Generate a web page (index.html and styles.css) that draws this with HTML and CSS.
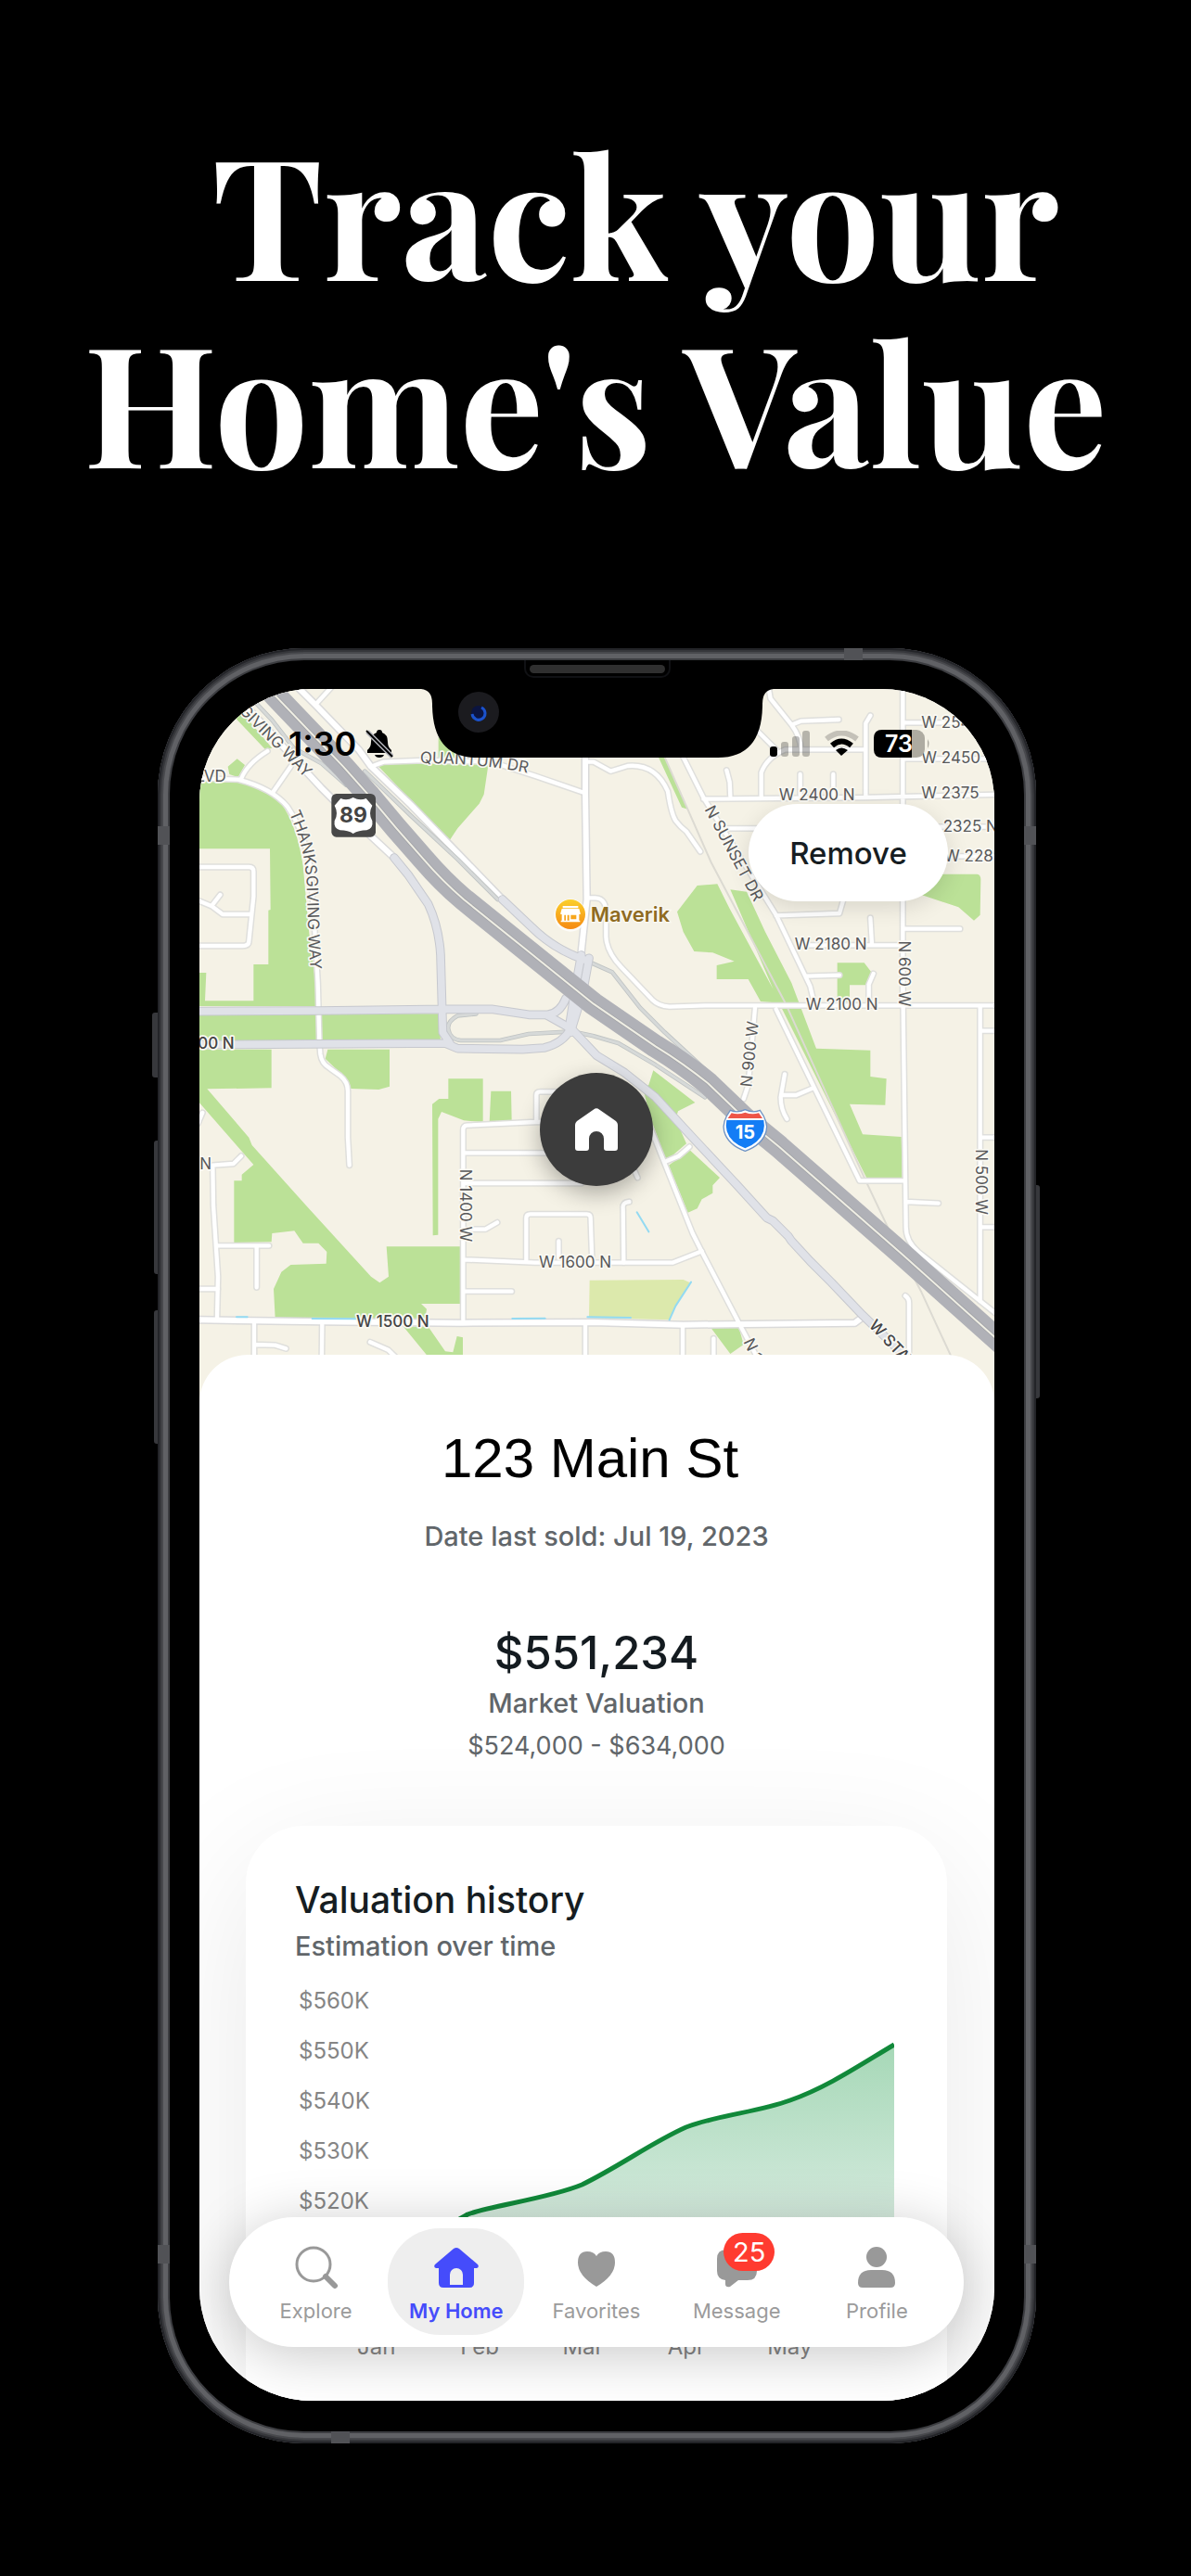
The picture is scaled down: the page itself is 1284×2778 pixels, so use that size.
FILE: index.html
```html
<!DOCTYPE html>
<html lang="en">
<head>
<meta charset="utf-8">
<meta name="viewport" content="width=device-width, initial-scale=1">
<title>Track your Home's Value</title>
<link rel="stylesheet" href="styles.css">
</head>
<body>
<main class="page">
  <h1 class="headline"><span class="headline-line headline-first">Track your</span> <span class="headline-line">Home's Value</span></h1>

  <div class="phone">
    <i class="side-key key-mute"></i><i class="side-key key-up"></i><i class="side-key key-down"></i><i class="side-key key-power"></i>
    <i class="band band-top"></i><i class="band band-bottom"></i><i class="band band-lt"></i><i class="band band-rt"></i><i class="band band-lb"></i><i class="band band-rb"></i>
    <i class="earpiece"></i>

    <div class="screen">
      <section class="map" aria-label="Map">
        <svg class="map-art" viewBox="165 189 2571 2310" role="img" aria-label="Area around the property">
          <defs>
            <g id="streets">
              <path d="M540 240L595 180M720 440L760 425L890 420L1110 425L1250 470L1410 525M165 478L290 482Q400 510 450 570Q510 660 525 780L540 1000L548 1140L553 1330L556 1370Q560 1400 585 1415L620 1440Q645 1460 645 1490V1640L650 1730M300 480Q320 430 385 390M405 520L460 440M165 765H325Q340 765 340 780V860L325 1005Q325 1020 305 1020H165M165 875L205 892L240 918H330M205 890L232 855"/>
              <g transform="translate(0 1140)"><path d="M300 560L275 585L208 590L210 720L225 950L222 1085M175 420L160 455M222 850H390M350 852V985M165 990H225M342 1100V1260M343 1170L410 1172L445 1183M562 1100L560 1260M717 1162L775 1187L830 1240M1300 450L1250 450L1030 461Q1018 462 1018 475V1090M1255 450V362Q1255 352 1268 352H1330M1020 550H1300M1020 648H1400M1030 797H1090L1128 775M1020 895L1250 905H1695L1790 868M1222 900V760Q1222 748 1235 748H1418Q1430 748 1430 760L1435 900M1327 835V890M1020 998H1175M1413 1105V1260"/></g>
              <g transform="translate(1440 0)"><path d="M-22 865H5Q45 865 40 930V990Q42 1040 90 1090L190 1195Q210 1215 245 1217L360 1213H1320M-26 425H0L55 455L110 438Q200 430 240 520Q250 590 265 615Q280 635 300 650L345 715M285 400L355 540L590 920L700 1150L712 1200M355 545L880 540L1320 530M565 180L572 220L640 305Q670 345 670 385M640 305L670 293L793 288M895 275L880 300V535M520 315L590 385M542 535V460Q560 410 620 385H880M430 452L440 490L442 535M668 465V530M775 465V530M1000 298H1320M1000 415H1320M415 640H560M1000 635H1320M1100 730H1320M590 922L795 915L808 870M1000 965H1185M690 1018H1000M895 930L900 1015M690 1118L795 1115M905 1110L890 1145V1205M1000 180V1210"/></g>
              <g transform="translate(1440 1140)"><path d="M115 708Q92 710 95 730L97 905M142 630L120 580M180 460L320 810L350 870L470 1100L560 1270M235 577L275 560L310 530M288 1108V1260M388 1150V1260M1008 1012Q1020 1020 1020 1035V1260M522 80L500 330L485 375M618 295L605 370Q605 410 625 440M612 363H655L710 340M590 85L860 640H1005M1000 0L1010 790Q1010 835 1050 870L1320 1085M1250 75V1030M1250 155H1320M1250 500H1320M1250 790H1320M1010 708L1115 713"/></g>
            </g>
            <g id="avenues">
              <path d="M480 180L540 240L680 385L720 440L850 565L1000 720L1145 870M280 205L440 380L560 510L650 600L795 735M1413 390V525L1418 870L1400 1040M165 2230L560 2236L1010 2240L1440 2238L1730 2246L2285 2240L2305 2225"/>
            </g>
            <g id="arterials">
              <path d="M160 1232L550 1230L960 1225L1110 1225L1230 1243H1290Q1330 1240 1350 1190M160 1340L960 1335L1000 1352L1210 1355L1280 1350Q1340 1335 1365 1290M795 735L840 790L905 885Q940 960 945 1050L952 1300L975 1335M1145 870L1240 960Q1310 1030 1410 1065M1400 1050L1380 1160L1360 1290M1425 1060L1405 1170L1365 1300"/>
              <path d="M1290 1245L1370 1290L1450 1375L1540 1430L1640 1510L1760 1640L1900 1790L2000 1900L2020 1910L2070 1960L2080 1975L2140 2040L2210 2110L2310 2215L2470 2370"/>
            </g>
            <g id="ramps">
              <path d="M1410 1065L1500 1105L1590 1220L1670 1300L1800 1420M1140 1325L1230 1305L1370 1297L1440 1312L1520 1335L1640 1405L1800 1510M1060 1240L1000 1246Q965 1265 970 1290Q975 1322 1010 1326H1140M320 205L400 290L470 380L560 430L640 500M700 455L850 600L1000 740L1130 870"/>
            </g>
            <path id="freeway" d="M380 160L405 205L630 440L710 530Q800 640 890 740Q950 810 1020 870L1200 1015L1440 1208L1640 1345Q1730 1400 1810 1465L1930 1580L2040 1670L2440 2020L2780 2324"/>
            <path id="way-a" d="M292 262L560 530"/>
            <path id="way-b" d="M455 590Q510 710 512 830L518 1000L530 1200"/>
            <path id="way-c" d="M878 428L1000 432Q1150 440 1290 475"/>
            <path id="way-d" d="M1798 578L2000 955"/>
            <path id="way-e" d="M2328 2250L2470 2400"/>
            <path id="way-f" d="M1924 2300L1990 2440"/>
            <linearGradient id="poi" x2="0" y2="1"><stop stop-color="#fbd02c"/><stop offset="1" stop-color="#f58a12"/></linearGradient>
          </defs>

          <rect class="land" x="100" y="100" width="2800" height="2500"/>
          <g class="park">
            <path d="M165 488L310 492Q390 520 430 560Q480 630 500 760L520 980L542 1150V1215H165ZM165 1240H940L945 1330H165ZM165 1355H398V1480L190 1483L325 1640L335 1665L510 1860L720 2090L748 2110L777 2090L770 1993H1015L1008 2178H882L900 2195L895 2225H410L405 2130L430 2075L460 2052L575 2048L577 2010L550 1982H500L472 1942L400 1950L398 1978L277 1980V1780H302V1760L340 1728L165 1528ZM825 2252H905L960 2332L985 2335L998 2283L1017 2287V2350H905ZM580 1355H780V1475L745 1485L655 1482L640 1450L572 1385ZM970 1450H1082V1590L1020 1585L948 1557L937 1580V1955L920 1957L918 1532L940 1515H970ZM1108 1490H1173L1175 1585L1103 1590ZM735 430H1100L1085 530L1070 560L1000 640L973 680ZM938 345L1010 400V420H938ZM262 262H300L400 380L378 385ZM257 440L287 415L312 435L290 475L262 465Z"/>
            <g transform="translate(1440 0)"><path d="M210 410H230L305 578L285 572ZM270 910L335 825L400 820L440 900L605 1205L540 1200L500 1128H398V1083L455 1070L385 1042L325 1038L290 975ZM442 838L495 845L555 975L640 1140L720 1352L895 1358V1443L947 1450L943 1535L828 1532L870 1630L995 1638L998 1775H885L600 1205ZM1060 855L1120 788H1240Q1252 790 1252 805L1250 920L1230 938L1180 895ZM788 1075H875L898 1105L885 1147H828V1200H788Z"/></g>
            <g transform="translate(1440 1140)"><path d="M193 283L328 387L273 415L265 440L300 520L235 575L185 440L160 343L178 330ZM310 540L408 630L385 655V680L350 700L335 730L305 743L243 590ZM380 1117L470 1115L485 1170L442 1200Z"/></g>
          </g>
          <path class="land" d="M165 706H393L395 903L388 905V1080H340V1198H183L187 1107H165Z"/>
          <path class="field" d="M1427 2102L1730 2100L1752 2110L1705 2185L1685 2230L1425 2223Z"/>
          <path class="rail" d="M1670 410L1820 750L2060 1205L2320 1780L2410 1970L2500 2140L2620 2400"/>
          <use href="#streets" class="street-edge"/><use href="#avenues" class="avenue-edge"/>
          <use href="#streets" class="street"/><use href="#avenues" class="avenue"/>
          <path class="water" d="M1755 2108L1705 2185L1685 2230M1580 1882L1618 1945M285 2221H320M530 2226L680 2227M1177 2226L1283 2225M1420 2221L1560 2223"/>
          <use href="#ramps" class="ramp-edge"/><use href="#ramps" class="ramp"/>
          <use href="#arterials" class="arterial-edge"/><use href="#arterials" class="arterial"/>
          <use href="#freeway" class="freeway"/><use href="#freeway" class="median-edge"/><use href="#freeway" class="median"/>

          <g class="label">
            <text><textPath href="#way-a">GIVING WAY</textPath></text>
            <text><textPath href="#way-b">THANKSGIVING WAY</textPath></text>
            <text><textPath href="#way-c">QUANTUM DR</textPath></text>
            <text><textPath href="#way-d">N SUNSET DR</textPath></text>
            <text><textPath href="#way-f">N 1</textPath></text>
            <text x="154" y="490">LVD</text>
            <text x="2500" y="315">W 2540</text>
            <text x="2500" y="430">W 2450</text>
            <text x="2500" y="544">W 2375</text>
            <text x="2570" y="652">2325 N</text>
            <text x="2574" y="747">W 228</text>
            <text x="2162" y="550" class="mid">W 2400 N</text>
            <text x="2207" y="1033" class="mid">W 2180 N</text>
            <text x="2243" y="1227" class="mid">W 2100 N</text>
            <text x="1380" y="2060" class="mid">W 1600 N</text>
            <text x="166" y="1742">N</text>
            <text class="mid" transform="translate(2428 1110) rotate(90)">N 600 W</text>
            <text class="mid" transform="translate(2676 1784) rotate(90)">N 500 W</text>
            <text class="mid" transform="translate(1008 1860) rotate(90)">N 1400 W</text>
            <text class="mid" transform="translate(1962 1372) rotate(-84)">N 900 W</text>
          </g>
          <g class="label label-strong">
            <text x="790" y="2253" class="mid">W 1500 N</text>
            <text x="160" y="1352">00 N</text>
            <text><textPath href="#way-e">W STATE</textPath></text>
          </g>

          <rect x="592" y="528" width="143" height="140" rx="16" fill="#484848"/>
          <path d="M622 543Q642 552 662 540Q684 552 704 543L724 566Q710 592 724 616Q728 640 706 646Q680 646 662 657Q646 646 620 646Q598 640 602 616Q616 592 602 566Z" fill="#fff"/>
          <text class="shield-us mid" x="663" y="621">89</text>
          <path d="M1882 1552Q1905 1562 1930 1550Q1955 1562 1978 1552Q2006 1590 1998 1620Q1986 1664 1930 1684Q1874 1664 1862 1620Q1854 1590 1882 1552Z" fill="#fff" stroke="#6f93c4" stroke-width="4"/>
          <path d="M1870 1584H1990Q1994 1604 1989 1620Q1978 1656 1930 1675Q1882 1656 1871 1620Q1866 1604 1870 1584Z" fill="#147df5"/>
          <path d="M1886 1561Q1908 1568 1930 1559Q1952 1568 1974 1561L1986 1578H1874Z" fill="#ee5548"/>
          <text class="shield-i mid" x="1930" y="1645">15</text>

          <circle cx="1365" cy="921" r="53" fill="#fff" opacity=".7"/>
          <circle cx="1365" cy="918" r="48" fill="url(#poi)"/>
          <path d="M1340 891H1390V898H1340ZM1337 900H1393L1397 914V918H1393V938H1396V943H1334V938H1337V918H1333V914ZM1345 920V938H1350V920ZM1355 920V938H1361V920ZM1366 920V934H1384V920Z" fill="#fff" fill-rule="evenodd"/>
          <text class="poi" x="1430" y="943">Maverik</text>
        </svg>
        <svg class="notch" viewBox="0 0 380 75" aria-hidden="true">
          <path d="M0 0Q12 1 12 16Q12 74 60 74H320Q368 74 368 16Q368 1 380 0Z"/>
          <circle cx="62" cy="25" r="22" fill="#1b1b1f"/>
          <circle cx="62" cy="26" r="8" fill="#0b1440"/>
          <path d="M55 27A7 7 0 1 0 65 20" fill="none" stroke="#1b52cc" stroke-width="3"/>
        </svg>
        <button class="pin" aria-label="Home location">
          <svg viewBox="0 0 46 46" width="46" height="46"><path d="M20 1.500Q23 -1 26 1.500L44 14Q46 16 46 18V43Q46 46 43 46H34Q31 46 31 43V33A8 8 0 0 0 15 33V43Q15 46 12 46H3Q0 46 0 43V18Q0 16 2 14Z" fill="#fff"/></svg>
        </button>
        <button class="remove">Remove</button>
      </section>

      <div class="status">
        <div class="status-group status-time">
          <span>1:30</span>
          <svg width="30" height="32" viewBox="0 0 30 32" aria-hidden="true"><path d="M15 1Q18 1 18 4Q24 6 24 14Q24 20 28 23V26H2V23Q6 20 6 14Q6 6 12 4Q12 1 15 1ZM10 28H20Q19 31 15 31Q11 31 10 28Z"/><path d="M2 3L29 30" stroke="#b3b4ba" stroke-width="5"/><path d="M1 2L29 30" stroke="#000" stroke-width="2"/></svg>
        </div>
        <div class="status-group">
          <svg width="44" height="30" viewBox="0 0 44 30" aria-hidden="true"><rect x="1" y="18" width="8" height="11" rx="3"/><g fill="#000" opacity=".25"><rect x="13" y="13" width="8" height="16" rx="3"/><rect x="25" y="7" width="8" height="22" rx="3"/><rect x="36" y="1" width="8" height="28" rx="3"/></g></svg>
          <svg width="37" height="28" viewBox="0 0 37 28" aria-hidden="true"><path d="M2 9Q18 -4 35 9" fill="none" stroke="#000" stroke-opacity=".2" stroke-width="6"/><path d="M8 16Q18 7 29 16" fill="none" stroke="#000" stroke-width="6"/><path d="M12 21Q18 16 25 21L18 27Z"/></svg>
          <svg class="battery" width="61" height="31" viewBox="0 0 61 31" role="img" aria-label="Battery 73%"><rect width="55" height="30" rx="9" fill="#aeaba1"/><path d="M9 0H41V30H9Q0 30 0 21V9Q0 0 9 0Z"/><path d="M58 10Q61 15 58 20Z" fill="#aeaba1"/><text x="27" y="24" text-anchor="middle">73</text></svg>
        </div>
      </div>

      <section class="sheet">
        <h2 class="address">123 Main St</h2>
        <p class="sold">Date last sold: Jul 19, 2023</p>
        <p class="value">$551,234</p>
        <p class="value-label">Market Valuation</p>
        <p class="value-range">$524,000 - $634,000</p>

        <article class="card">
          <h3 class="card-title">Valuation history</h3>
          <p class="card-sub">Estimation over time</p>
          <div class="chart">
            <ol class="y-axis"><li>$560K</li><li>$550K</li><li>$540K</li><li>$530K</li><li>$520K</li><li>$510K</li><li>$500K</li></ol>
            <svg class="plot" viewBox="0 0 557 378" preserveAspectRatio="none" role="img" aria-label="Valuation rising from January to June">
              <defs><linearGradient id="area" gradientUnits="userSpaceOnUse" x1="0" x2="0" y1="74" y2="378"><stop stop-color="#a6d8b7"/><stop offset=".55" stop-color="#cfe8d9"/><stop offset="1" stop-color="#f4faf6"/></linearGradient></defs>
              <path d="M0 304C40 290 75 270 98 257C120 248 185 240 221 225C262 205 295 180 333 163C370 149 410 147 445 134C485 120 520 96 557 74V378H0Z" fill="url(#area)"/>
              <path d="M0 304C40 290 75 270 98 257C120 248 185 240 221 225C262 205 295 180 333 163C370 149 410 147 445 134C485 120 520 96 557 74" fill="none" stroke="#11893a" stroke-width="5"/>
            </svg>
          </div>
          <ol class="x-axis"><li>Jan</li><li>Feb</li><li>Mar</li><li>Apr</li><li>May</li></ol>
        </article>
      </section>

      <nav class="tabs" aria-label="Main">
        <a class="tab" href="#explore">
          <svg class="tab-icon" viewBox="0 0 48 48" aria-hidden="true"><circle cx="21" cy="21" r="18" fill="none" stroke="#999" stroke-width="3"/><path d="M34 34L44 44" stroke="#999" stroke-width="6" stroke-linecap="round"/></svg>
          <span>Explore</span></a>
        <a class="tab tab-active" href="#home" aria-current="page">
          <svg class="tab-icon" viewBox="0 0 48 48" aria-hidden="true"><path d="M21 4Q24 2 27 4L47 21Q49 24 46 25H43V41Q43 46 38 46H10Q5 46 5 41V25H2Q-1 24 1 21ZM17 43H31V32A7 7 0 0 0 17 32Z" fill="#454cfb" fill-rule="evenodd"/></svg>
          <span>My Home</span></a>
        <a class="tab" href="#favorites">
          <svg class="tab-icon" viewBox="0 0 48 48" aria-hidden="true"><path d="M24 45Q4 33 4 19Q4 7 14 7Q21 7 24 12Q27 7 34 7Q44 7 44 19Q44 33 24 45Z" fill="#999"/></svg>
          <span>Favorites</span></a>
        <a class="tab" href="#message">
          <span class="icon-wrap"><svg class="tab-icon" viewBox="0 0 48 48" aria-hidden="true"><path d="M13 5H36Q46 5 46 15V28Q46 38 36 38H26L17 45Q12 46 12 42V38Q3 37 3 28V15Q3 5 13 5Z" fill="#999"/></svg><b class="badge">25</b></span>
          <span>Message</span></a>
        <a class="tab" href="#profile">
          <svg class="tab-icon" viewBox="0 0 48 48" aria-hidden="true"><circle cx="24" cy="13" r="11" fill="#999"/><path d="M4 41Q4 27 18 27H30Q44 27 44 41Q44 46 39 46H9Q4 46 4 41Z" fill="#999"/></svg>
          <span>Profile</span></a>
      </nav>
    </div>
  </div>
</main>
</body>
</html>
```

FILE: styles.css
```css
* { box-sizing: border-box; }
body { margin: 0; background: #000; font-family: Inter, "Liberation Sans", sans-serif; }
h1, h2, h3, p, ol { margin: 0; padding: 0; font-weight: inherit; }
ol { list-style: none; }
button { border: 0; padding: 0; font: inherit; }

.page { padding: 127px 0 143px; }

.headline { color: #fff; font-family: "Playfair Display", "Liberation Serif", serif; font-weight: 700; font-size: 180px; line-height: 202px; text-align: center; }
.headline-line { display: block; }
.headline-first { padding-left: 86px; }

/* Device body */
.phone {
  position: relative;
  margin: 168px 167px 0 170px;
  padding: 44px 45px 46px;
  border-radius: 158px;
  background: #000;
  box-shadow: inset 0 0 0 2px #232428, inset 0 0 0 4px #36373b, inset 0 0 0 6px #48494d, inset 0 0 0 11px #606165, inset 0 0 0 13px #3c3d41;
}
.side-key { position: absolute; background: #37383c; }
.key-mute { left: -6px; top: 393px; width: 6px; height: 70px; border-radius: 3px 0 0 3px; }
.key-up { left: -4px; top: 531px; width: 4px; height: 144px; border-radius: 3px 0 0 3px; }
.key-down { left: -4px; top: 714px; width: 4px; height: 144px; border-radius: 3px 0 0 3px; }
.key-power { right: -4px; top: 579px; width: 4px; height: 230px; border-radius: 0 3px 3px 0; }
.band { position: absolute; width: 13px; height: 20px; background: #515256; }
.band-top, .band-bottom { width: 20px; height: 13px; }
.band-top { top: 0; right: 187px; }
.band-bottom { bottom: 0; left: 187px; }
.band-lt, .band-lb { left: 0; }
.band-rt, .band-rb { right: 0; }
.band-lt, .band-rt { top: 192px; }
.band-lb, .band-rb { bottom: 194px; }
.earpiece { position: absolute; top: 13px; left: 50%; width: 158px; height: 19px; margin-left: -79px; border: 2px solid #101114; border-top: 0; border-radius: 0 0 10px 10px; }
.earpiece::after { content: ""; display: block; height: 9px; margin: 5px 4px 0; border-radius: 5px; background: #2f2f2f; }

.screen { position: relative; overflow: hidden; border-radius: 122px; background: #fff; }

/* Map */
.map { position: relative; }
.map-art { display: block; width: 100%; height: auto; }
.land { fill: #f5f2e6; }
.park { fill: #bbe197; }
.field { fill: #dce9ac; }
.street, .street-edge, .avenue, .avenue-edge, .arterial, .arterial-edge, .ramp, .ramp-edge, .freeway, .median, .median-edge, .rail, .water { fill: none; stroke-linecap: round; stroke-linejoin: round; }
.street-edge { stroke: #dfdfdc; stroke-width: 22px; }
.street { stroke: #fff; stroke-width: 13px; }
.avenue-edge { stroke: #dadada; stroke-width: 27px; }
.avenue { stroke: #fff; stroke-width: 18px; }
.arterial-edge { stroke: #c6c8ce; stroke-width: 29px; }
.arterial { stroke: #e0e2e8; stroke-width: 23px; }
.ramp-edge { stroke: #bfc3c3; stroke-width: 14px; }
.ramp { stroke: #d6d9d8; stroke-width: 9px; }
.freeway { stroke: #b0b1b7; stroke-width: 74px; }
.median-edge { stroke: #a3a4a8; stroke-width: 11px; }
.median { stroke: #efeee4; stroke-width: 6px; }
.rail { stroke: #dcdad2; stroke-width: 6px; }
.water { stroke: #93daf2; stroke-width: 6px; }
.label { fill: #58585a; font-size: 51px; stroke: #faf9f3; stroke-width: 10px; stroke-linejoin: round; paint-order: stroke; }
.label-strong { fill: #444446; font-weight: 500; }
.mid { text-anchor: middle; }
.shield-us { fill: #444; font-size: 69px; font-weight: 700; }
.shield-i { fill: #fff; font-size: 60px; font-weight: 700; }
.poi { fill: #8f6b22; font-size: 66px; font-weight: 600; stroke: #faf9f3; stroke-width: 8px; paint-order: stroke; }

.notch { position: absolute; top: 0; left: 50%; width: 380px; height: 75px; margin-left: -190px; }
.pin { position: absolute; top: 414px; left: 50%; display: grid; place-items: center; width: 122px; height: 122px; margin-left: -62px; border-radius: 50%; background: #3c3c3c; box-shadow: 0 8px 24px rgba(0, 0, 0, .3); }
.remove { position: absolute; top: 124px; right: 50px; width: 215px; height: 105px; border-radius: 53px; background: #fff; color: #161d22; font-size: 33px; font-weight: 500; box-shadow: 0 6px 24px rgba(0, 0, 0, .12); }

.status { position: absolute; top: 40px; left: 0; right: 0; display: flex; align-items: center; justify-content: space-between; height: 38px; padding: 0 69px 0 96px; }
.status-group { display: flex; align-items: center; gap: 16px; }
.status-time { gap: 10px; font-size: 36px; line-height: 38px; font-weight: 600; }
.battery text { fill: #fff; font-size: 25px; font-weight: 600; }

/* Property sheet */
.sheet { position: relative; overflow: hidden; margin-top: -52px; padding: 76px 51px 0 50px; border-radius: 52px 52px 0 0; background: #fff; color: #61666a; text-align: center; }
.address { padding-right: 14px; color: #000; font-family: "Liberation Sans", sans-serif; font-size: 60px; line-height: 72px; }
.sold { margin-top: 30px; font-size: 29px; line-height: 36px; font-weight: 500; }
.value { margin-top: 78px; color: #141b20; font-size: 49px; line-height: 60px; font-weight: 500; }
.value-label { margin-top: 4px; font-size: 29px; line-height: 40px; font-weight: 500; }
.value-range { margin-top: 6px; font-size: 27px; line-height: 40px; }

.card { margin-top: 66px; padding: 56px 57px 40px 53px; border-radius: 62px 62px 0 0; background: #fff; text-align: left; box-shadow: 0 40px 150px rgba(0, 0, 0, .09); }
.card-title { color: #161d22; font-size: 39px; line-height: 48px; font-weight: 500; }
.card-sub { margin-top: 8px; font-size: 29px; line-height: 36px; font-weight: 500; }
.chart { display: grid; grid-template-columns: 88px 1fr; margin-top: 14px; }
.y-axis { padding-left: 4px; color: #858585; font-size: 24px; line-height: 54px; }
.plot { display: block; width: 100%; height: 378px; }
.x-axis { display: grid; grid-template-columns: repeat(5, 1fr); margin: 4px 57px 0 32px; color: #858585; font-size: 24px; line-height: 36px; text-align: center; }

/* Tab bar */
.tabs { position: absolute; left: 32px; right: 33px; bottom: 58px; display: grid; grid-template-columns: repeat(5, 1fr); gap: 4px; height: 140px; padding: 12px 20px 13px; border-radius: 70px; background: #fff; box-shadow: 0 8px 60px rgba(0, 0, 0, .22); }
.tab { display: flex; flex-direction: column; align-items: center; gap: 7px; padding-top: 18px; border-radius: 56px; color: #9b9b9b; font-size: 22px; line-height: 32px; text-decoration: none; }
.tab-active { background: #eee; color: #454cfb; font-weight: 600; }
.tab-icon { display: block; width: 48px; height: 48px; }
.icon-wrap { position: relative; }
.badge { position: absolute; top: -13px; left: 10px; width: 55px; height: 41px; border-radius: 21px; background: #ff3b30; color: #fff; font-size: 29px; line-height: 41px; font-weight: 400; text-align: center; }
```
